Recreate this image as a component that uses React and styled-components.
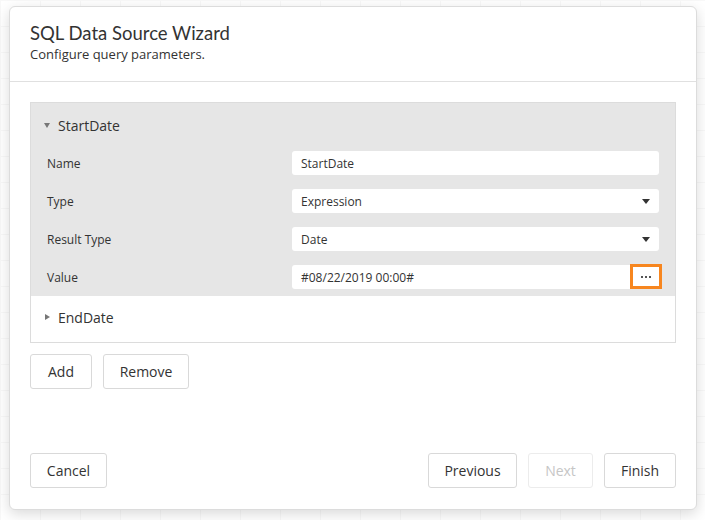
import React from 'react';
import styled, { createGlobalStyle } from 'styled-components';

const GlobalStyle = createGlobalStyle`
  html, body {
    margin: 0;
    padding: 0;
    background: #fff;
  }
  body {
    font-family: 'Open Sans', 'Noto Sans', sans-serif;
    color: #333;
  }
`;

const Page = styled.div`
  width: 705px;
  height: 520px;
  padding: 6px 8px 0 9px;
  box-sizing: border-box;
  background-color: #fff;
  background-image:
    linear-gradient(#f8f8f8 1px, transparent 1px),
    linear-gradient(90deg, #f8f8f8 1px, transparent 1px);
  background-size: 40px 26px;
`;

const Dialog = styled.div`
  width: 688px;
  height: 504px;
  box-sizing: border-box;
  background: #fff;
  border: 1px solid #dcdcdc;
  border-radius: 6px;
  box-shadow: 0 4px 14px rgba(0, 0, 0, 0.15);
  display: flex;
  flex-direction: column;
`;

const Header = styled.div`
  padding: 14px 20px 0;
  height: 75px;
  box-sizing: border-box;
  border-bottom: 1px solid #e0e0e0;
`;

const Title = styled.div`
  font-family: 'Lato', 'Open Sans', sans-serif;
  font-size: 18.5px;
  line-height: 24px;
  color: #333;
`;

const Subtitle = styled.div`
  font-size: 13px;
  line-height: 18px;
  color: #333;
`;

const Body = styled.div`
  flex: 1;
  padding: 20px 20px 0;
`;

const Panel = styled.div`
  border: 1px solid #dcdcdc;
`;

const Section = styled.div`
  background: ${p => (p.open ? '#e6e6e6' : '#fff')};
`;

const SectionHeader = styled.div`
  height: ${p => (p.open ? '41px' : '46px')};
  box-sizing: border-box;
  padding: ${p => (p.open ? '4px 0 0' : '0 0 4px')} 13px;
  display: flex;
  align-items: center;
  gap: 7px;
  font-size: 14px;
  color: #333;
`;

const Caret = styled.span`
  width: 0;
  height: 0;
  ${p =>
    p.open
      ? `border-left: 3px solid transparent;
         border-right: 3px solid transparent;
         border-top: 5px solid #777;`
      : `border-top: 3px solid transparent;
         border-bottom: 3px solid transparent;
         border-left: 5px solid #777;
         margin-left: 1px;`}
  margin-right: 1px;
`;

const Row = styled.div`
  height: 38px;
  display: grid;
  grid-template-columns: 245px 367px;
  align-items: center;
  padding-left: 16px;
`;

const Label = styled.div`
  font-size: 12px;
  color: #333;
`;

const Field = styled.div`
  position: relative;
  height: 24px;
  background: #fff;
  border-radius: 3px;
  display: flex;
  align-items: center;
  padding-left: 9px;
  font-size: 12px;
  color: #333;
`;

const FieldText = styled.span`
  flex: 1;
`;

const DropArrow = styled.span`
  width: 0;
  height: 0;
  border-left: 4px solid transparent;
  border-right: 4px solid transparent;
  border-top: 5px solid #333;
  margin-right: 9px;
`;

const EllipsisButton = styled.div`
  position: absolute;
  right: -3px;
  top: -1px;
  width: 32px;
  height: 25px;
  box-sizing: border-box;
  border: 3px solid #f7861f;
  background: #fff;
  display: flex;
  align-items: center;
  justify-content: center;
  gap: 2px;
`;

const Dot = styled.span`
  width: 2px;
  height: 2px;
  background: #555;
`;

const ButtonRow = styled.div`
  display: flex;
  gap: 11px;
  margin-top: 11px;
`;

const Footer = styled.div`
  display: flex;
  align-items: center;
  padding: 0 20px 21px;
`;

const Spacer = styled.div`
  flex: 1;
`;

const Button = styled.button`
  height: 35px;
  min-width: ${p => p.w}px;
  box-sizing: border-box;
  background: #fff;
  border: 1px solid #d9d9d9;
  border-radius: 3px;
  font-family: 'Open Sans', 'Noto Sans', sans-serif;
  font-size: 14px;
  color: ${p => (p.disabled ? '#c6c6c6' : '#333')};
  border-color: ${p => (p.disabled ? '#ececec' : '#d9d9d9')};
  padding: 0;
  margin-left: ${p => p.ml || 0}px;
`;

const Dropdown = ({ value }) => (
  <Field>
    <FieldText>{value}</FieldText>
    <DropArrow />
  </Field>
);

export default function App() {
  return (
    <Page>
      <GlobalStyle />
      <Dialog>
        <Header>
          <Title>SQL Data Source Wizard</Title>
          <Subtitle>Configure query parameters.</Subtitle>
        </Header>
        <Body>
          <Panel>
            <Section open>
              <SectionHeader open>
                <Caret open />
                StartDate
              </SectionHeader>
              <Row>
                <Label>Name</Label>
                <Field>
                  <FieldText>StartDate</FieldText>
                </Field>
              </Row>
              <Row>
                <Label>Type</Label>
                <Dropdown value="Expression" />
              </Row>
              <Row>
                <Label>Result Type</Label>
                <Dropdown value="Date" />
              </Row>
              <Row>
                <Label>Value</Label>
                <Field>
                  <FieldText>#08/22/2019 00:00#</FieldText>
                  <EllipsisButton>
                    <Dot />
                    <Dot />
                    <Dot />
                  </EllipsisButton>
                </Field>
              </Row>
            </Section>
            <Section>
              <SectionHeader>
                <Caret />
                EndDate
              </SectionHeader>
            </Section>
          </Panel>
          <ButtonRow>
            <Button w={62}>Add</Button>
            <Button w={86}>Remove</Button>
          </ButtonRow>
        </Body>
        <Footer>
          <Button w={77}>Cancel</Button>
          <Spacer />
          <Button w={89}>Previous</Button>
          <Button w={65} ml={11} disabled>Next</Button>
          <Button w={72} ml={11}>Finish</Button>
        </Footer>
      </Dialog>
    </Page>
  );
}
